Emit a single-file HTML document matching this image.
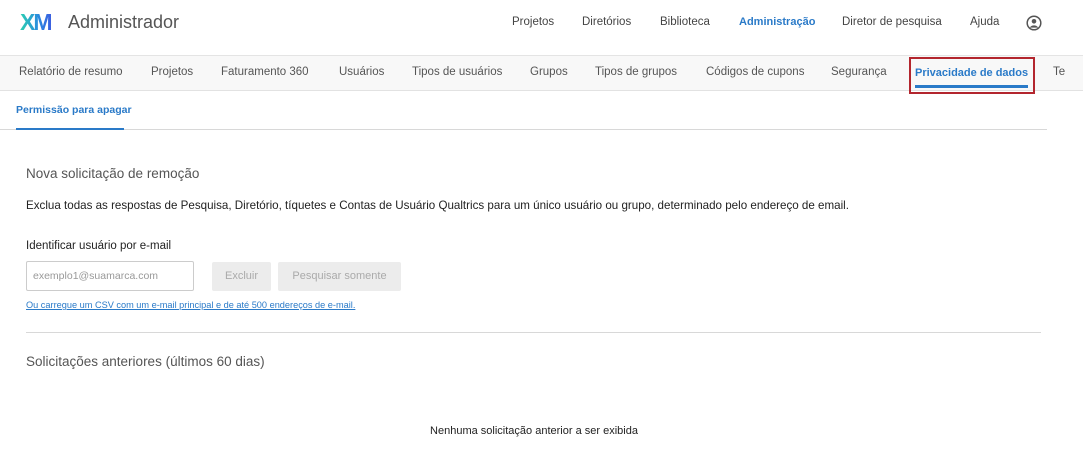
<!DOCTYPE html>
<html><head><meta charset="utf-8"><style>
body{margin:0;width:1083px;height:456px;background:#fff;font-family:"Liberation Sans",sans-serif;position:relative;overflow:hidden;color:#333}
.a{position:absolute;white-space:nowrap}
.t{font-size:11.5px;color:#444;top:16px}
.s{font-size:11.5px;color:#555;top:66px}
</style></head><body>
<div class="a" style="left:20px;top:9px;font-size:23px;font-weight:bold;letter-spacing:-2px;background:linear-gradient(90deg,#2bd0b0,#2a8ae0 60%,#3b5fe0);-webkit-background-clip:text;color:transparent">XM</div>
<div class="a" style="left:68px;top:12px;font-size:18px;color:#555">Administrador</div>
<div class="a t" style="left:512px">Projetos</div>
<div class="a t" style="left:582px">Diretórios</div>
<div class="a t" style="left:660px">Biblioteca</div>
<div class="a t" style="left:739px;color:#2a7ac8;font-weight:bold;font-size:11px">Administração</div>
<div class="a t" style="left:842px">Diretor de pesquisa</div>
<div class="a t" style="left:970px">Ajuda</div>
<svg class="a" style="left:1026px;top:15px" width="16" height="16" viewBox="0 0 16 16"><circle cx="8" cy="8" r="6.8" fill="none" stroke="#555" stroke-width="1.5"/><circle cx="8" cy="6.3" r="2.3" fill="#555"/><path d="M3.8 12.6a5 5 0 0 1 8.4 0" fill="#555"/></svg>
<div class="a" style="left:0;top:55px;width:1083px;height:34px;background:#f8f8f8;border-top:1px solid #e4e4e4;border-bottom:1px solid #e2e2e2"></div>
<div class="a s" style="left:19px">Relatório de resumo</div>
<div class="a s" style="left:151px">Projetos</div>
<div class="a s" style="left:221px">Faturamento 360</div>
<div class="a s" style="left:339px">Usuários</div>
<div class="a s" style="left:412px">Tipos de usuários</div>
<div class="a s" style="left:530px">Grupos</div>
<div class="a s" style="left:595px">Tipos de grupos</div>
<div class="a s" style="left:706px">Códigos de cupons</div>
<div class="a s" style="left:831px">Segurança</div>
<div class="a s" style="left:915px;color:#2a7ac8;font-weight:bold;font-size:11px;top:67px">Privacidade de dados</div>
<div class="a s" style="left:1053px">Te</div>
<div class="a" style="left:915px;top:85px;width:113px;height:3px;background:#2a7ac8"></div>
<div class="a" style="left:909px;top:57px;width:122px;height:33px;border:2px solid #b3262e"></div>
<div class="a" style="left:16px;top:104px;font-size:10.5px;font-weight:bold;color:#2a7ac8">Permissão para apagar</div>
<div class="a" style="left:0;top:129px;width:1047px;height:1px;background:#d8d8d8"></div>
<div class="a" style="left:16px;top:128px;width:108px;height:2px;background:#2a7ac8"></div>
<div class="a" style="left:26px;top:166px;font-size:13.5px;color:#555">Nova solicitação de remoção</div>
<div class="a" style="left:26px;top:199px;font-size:11.6px;color:#222">Exclua todas as respostas de Pesquisa, Diretório, tíquetes e Contas de Usuário Qualtrics para um único usuário ou grupo, determinado pelo endereço de email.</div>
<div class="a" style="left:26px;top:240px;font-size:11.5px;color:#222">Identificar usuário por e-mail</div>
<div class="a" style="left:26px;top:261px;height:28px;border:1px solid #ccc;border-radius:2px;font-size:10.5px;color:#999;line-height:28px;padding-left:6px;width:160px">exemplo1@suamarca.com</div>
<div class="a" style="left:212px;top:262px;width:59px;height:29px;background:#ececec;border-radius:2px;font-size:11px;color:#aaa;text-align:center;line-height:29px">Excluir</div>
<div class="a" style="left:278px;top:262px;width:123px;height:29px;background:#ececec;border-radius:2px;font-size:11px;color:#aaa;text-align:center;line-height:29px">Pesquisar somente</div>
<div class="a" style="left:26px;top:300px;font-size:9.2px;color:#2a7ac8;text-decoration:underline">Ou carregue um CSV com um e-mail principal e de até 500 endereços de e-mail.</div>
<div class="a" style="left:26px;top:332px;width:1015px;height:1px;background:#d8d8d8"></div>
<div class="a" style="left:26px;top:354px;font-size:13.5px;color:#555">Solicitações anteriores (últimos 60 dias)</div>
<div class="a" style="left:0;width:1068px;text-align:center;top:425px;font-size:11px;color:#222">Nenhuma solicitação anterior a ser exibida</div>
</body></html>
